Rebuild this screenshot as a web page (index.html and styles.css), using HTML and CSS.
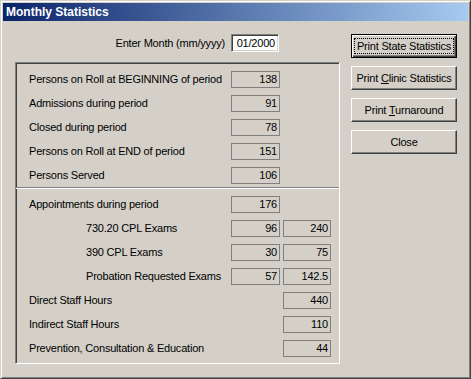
FILE: index.html
```html
<!DOCTYPE html>
<html lang="en">
<head>
    <meta charset="UTF-8">
    <title>Monthly Statistics</title>
    <link rel="stylesheet" href="styles.css">
</head>
<body>
    <div class="window">
        <div class="titlebar">Monthly Statistics</div>
        <div class="client">
            <div class="main">
                <div class="month-row">
                    <span class="month-label">Enter Month (mm/yyyy)</span>
                    <div class="edit">01/2000</div>
                </div>
                <div class="panel">
                    <div class="row"><span class="label">Persons on Roll at BEGINNING of period</span><span class="box">138</span></div>
                    <div class="row"><span class="label">Admissions during period</span><span class="box">91</span></div>
                    <div class="row"><span class="label">Closed during period</span><span class="box">78</span></div>
                    <div class="row"><span class="label">Persons on Roll at END of period</span><span class="box">151</span></div>
                    <div class="row"><span class="label">Persons Served</span><span class="box">106</span></div>
                    <div class="sep"></div>
                    <div class="row"><span class="label">Appointments during period</span><span class="box">176</span></div>
                    <div class="row"><span class="label indent">730.20 CPL Exams</span><span class="box">96</span><span class="box wide">240</span></div>
                    <div class="row"><span class="label indent">390 CPL Exams</span><span class="box">30</span><span class="box wide">75</span></div>
                    <div class="row"><span class="label indent">Probation Requested Exams</span><span class="box">57</span><span class="box wide">142.5</span></div>
                    <div class="row"><span class="label">Direct Staff Hours</span><span class="box blank"></span><span class="box wide">440</span></div>
                    <div class="row"><span class="label">Indirect Staff Hours</span><span class="box blank"></span><span class="box wide">110</span></div>
                    <div class="row"><span class="label">Prevention, Consultation &amp; Education</span><span class="box blank"></span><span class="box wide">44</span></div>
                </div>
            </div>
            <div class="buttons">
                <button class="btn default"><span class="focus">Print State Statistics</span></button>
                <button class="btn">Print <u>C</u>linic Statistics</button>
                <button class="btn">Print <u>T</u>urnaround</button>
                <button class="btn">Close</button>
            </div>
        </div>
    </div>
</body>
</html>
```

FILE: styles.css
```css
* {
    margin: 0;
    padding: 0;
    box-sizing: border-box;
}
body {
    background: #d4d0c8;
    font-family: "Liberation Sans", Arial, sans-serif;
    font-size: 11px;
    letter-spacing: -0.2px;
    color: #000;
}
.window {
    width: 471px;
    height: 379px;
    background: #d4d0c8;
    border: 1px solid;
    border-color: #d4d0c8 #404040 #404040 #d4d0c8;
    box-shadow: inset 1px 1px #fff, inset -1px -1px #808080;
    padding: 2px;
}
.titlebar {
    height: 18px;
    line-height: 18px;
    padding-left: 3px;
    background: linear-gradient(to right, #0a246a, #a6caf0);
    color: #fff;
    font-weight: bold;
    font-size: 12px;
    letter-spacing: 0;
}
.client {
    display: flex;
    padding: 13px 0 0 12px;
}
.main {
    width: 325px;
}
.month-row {
    display: flex;
    justify-content: flex-end;
    align-items: center;
    gap: 6px;
    height: 18px;
    padding-right: 61px;
}
.edit {
    width: 48px;
    height: 18px;
    background: #fff;
    border: 1px solid;
    border-color: #808080 #fff #fff #808080;
    box-shadow: inset 1px 1px #404040, inset -1px -1px #d4d0c8;
    text-align: right;
    padding: 0 3px;
    line-height: 16px;
}
.panel {
    margin-top: 10px;
    height: 302px;
    border: 1px solid;
    border-color: #808080 #fff #fff #808080;
    box-shadow: inset 1px 1px #404040;
    padding-top: 4px;
}
.row {
    display: flex;
    align-items: center;
    height: 24px;
    padding-left: 13px;
}
.label {
    width: 202px;
    white-space: nowrap;
}
.label.indent {
    padding-left: 57px;
}
.box {
    width: 49px;
    height: 17px;
    border: 1px solid #808080;
    text-align: right;
    padding-right: 2px;
    line-height: 15px;
}
.box.wide {
    width: 48px;
    margin-left: 3px;
}
.box.blank {
    visibility: hidden;
}
.sep {
    height: 2px;
    border-top: 1px solid #808080;
    border-bottom: 1px solid #fff;
    margin-bottom: 3px;
}
.buttons {
    display: flex;
    flex-direction: column;
    gap: 8px;
    margin-left: 11px;
    width: 106px;
}
.btn {
    height: 24px;
    background: #d4d0c8;
    font-family: inherit;
    font-size: 11px;
    letter-spacing: -0.2px;
    color: #000;
    border: 1px solid;
    border-color: #fff #404040 #404040 #fff;
    box-shadow: inset -1px -1px #808080;
    cursor: pointer;
}
.btn.default {
    border: 1px solid #000;
    box-shadow: inset 1px 1px #fff, inset -1px -1px #404040, inset -2px -2px #808080;
    padding: 2px;
}
.btn .focus {
    display: block;
    height: 16px;
    line-height: 14px;
    border: 1px dotted #000;
}
```
